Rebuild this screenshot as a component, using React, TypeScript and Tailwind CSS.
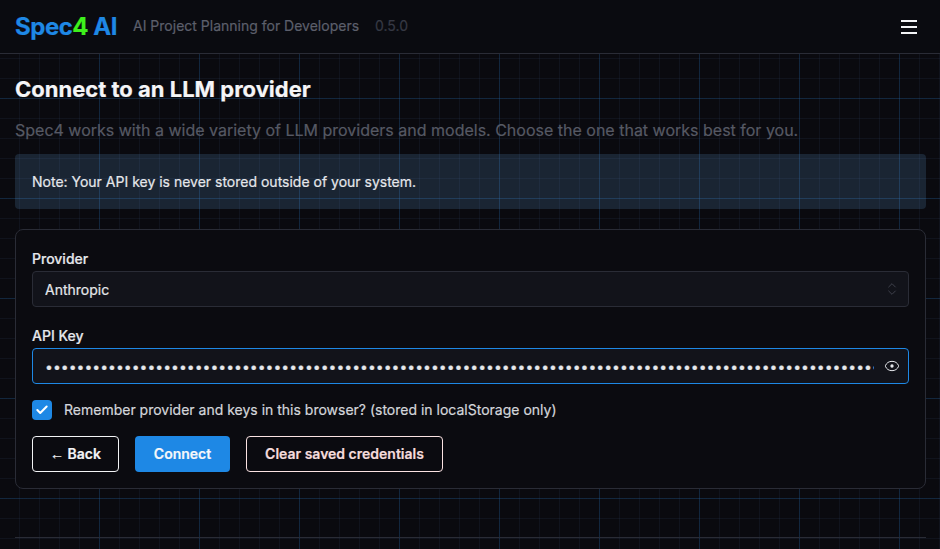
import { Check, ChevronsUpDown } from "lucide-react";

const App = () => {
  return (
    <div className="min-h-screen h-[549px] overflow-hidden bg-[#0a0a0f] font-['Inter',sans-serif] text-white [-webkit-text-stroke:0.2px]">
      {/* Header */}
      <header className="h-[54px] flex items-center justify-between pl-[15px] pr-[23px] bg-[#0a0b10] border-b border-[#2a2c36]">
        <div className="flex items-center">
          <h1 className="text-2xl font-bold tracking-[-0.02em] text-[#1e88e5] leading-none">
            Spec<span className="text-[#3ef01c]">4</span> AI
          </h1>
          <span className="ml-4 text-sm leading-5 -mt-0.5 text-[#5c5f6b]">AI Project Planning for Developers</span>
          <span className="ml-4 text-sm leading-5 -mt-0.5 text-[#363944]">0.5.0</span>
        </div>
        <svg width="16" height="14" viewBox="0 0 16 14" className="text-[#f3f4f6]" stroke="currentColor" strokeWidth="2">
          <path d="M0 1h16M0 7h16M0 13h16" />
        </svg>
      </header>

      {/* Page */}
      <main className="h-[495px] pl-[15px] pr-[14px] pt-[23px] bg-[#0a0a0f] bg-[linear-gradient(rgba(30,136,229,0.17)_1px,transparent_1px),linear-gradient(90deg,rgba(30,136,229,0.17)_1px,transparent_1px),linear-gradient(rgba(90,130,190,0.08)_1px,transparent_1px),linear-gradient(90deg,rgba(90,130,190,0.08)_1px,transparent_1px)] bg-[size:100px_100px,100px_100px,20px_20px,20px_20px] bg-[position:-1px_44px,-1px_44px,-1px_4px,-1px_4px]">
        <h2 className="text-[22px] leading-6 font-bold text-[#f5f5f7]">Connect to an LLM provider</h2>
        <p className="mt-[17px] text-base leading-6 text-[#565964]">
          Spec4 works with a wide variety of LLM providers and models. Choose the one that works best for you.
        </p>

        <div className="mt-3 h-[55px] flex items-center px-[17px] rounded bg-[rgba(110,180,240,0.16)] text-sm text-[#e5e7eb]">
          Note: Your API key is never stored outside of your system.
        </div>

        {/* Form card */}
        <section className="mt-5 h-[260px] px-4 pt-[19px] rounded-lg border border-[#2a2c36] bg-[#0b0b10]">
          <label className="block text-sm leading-5 font-medium text-[#e5e7eb]">Provider</label>
          <div className="relative mt-[2px]">
            <select className="w-full h-9 pl-3 pr-8 pt-[2px] appearance-none rounded border border-[#2a2c36] bg-[#12131a] text-sm text-[#e5e7eb] outline-none">
              <option>Anthropic</option>
            </select>
            <ChevronsUpDown className="absolute right-[9px] top-[10px] w-4 h-4 text-[#3f414c]" strokeWidth={1.5} />
          </div>

          <label className="block mt-[19px] text-sm leading-5 font-medium text-[#e5e7eb]">API Key</label>
          <div className="relative mt-[2px]">
            <input
              type="password"
              readOnly
              value={"x".repeat(140)}
              className="w-full h-9 pl-3 pr-[34px] rounded border border-[#1e88e5] bg-[#12131a] text-sm text-[#e5e7eb] outline-none"
            />
            <svg viewBox="0 0 24 24" className="absolute right-[9px] top-[10px] w-4 h-4 text-[#e5e7eb]" fill="none" stroke="currentColor" strokeWidth="1.5">
              <path d="M2.062 12.348a1 1 0 0 1 0-.696 10.75 10.75 0 0 1 19.876 0 1 1 0 0 1 0 .696 10.75 10.75 0 0 1-19.876 0" />
              <circle cx="12" cy="12" r="2.5" fill="currentColor" stroke="none" />
            </svg>
          </div>

          <label className="flex items-center mt-4 h-5">
            <span className="w-5 h-5 flex items-center justify-center rounded bg-[#1e88e5]">
              <Check className="w-3.5 h-3.5 text-white" strokeWidth={3.5} />
            </span>
            <span className="ml-3 text-sm text-[#d4d6db]">
              Remember provider and keys in this browser? (stored in localStorage only)
            </span>
          </label>

          <div className="flex gap-4 mt-4">
            <button className="h-9 w-[87px] rounded border border-[#f3f4f6] text-sm font-semibold text-[#f3f4f6]">
              <span className="font-['Liberation_Sans'] font-normal">←</span> Back
            </button>
            <button className="h-9 w-[95px] rounded bg-[#1e88e5] text-sm font-semibold text-[#f5f7fa]">Connect</button>
            <button className="h-9 w-[197px] rounded border border-[#fbe3e3] text-sm font-semibold text-[#f5dcdc]">Clear saved credentials</button>
          </div>
        </section>

        <hr className="mt-[48px] border-[#2a2c36]" />
      </main>
    </div>
  );
};

export default App;
